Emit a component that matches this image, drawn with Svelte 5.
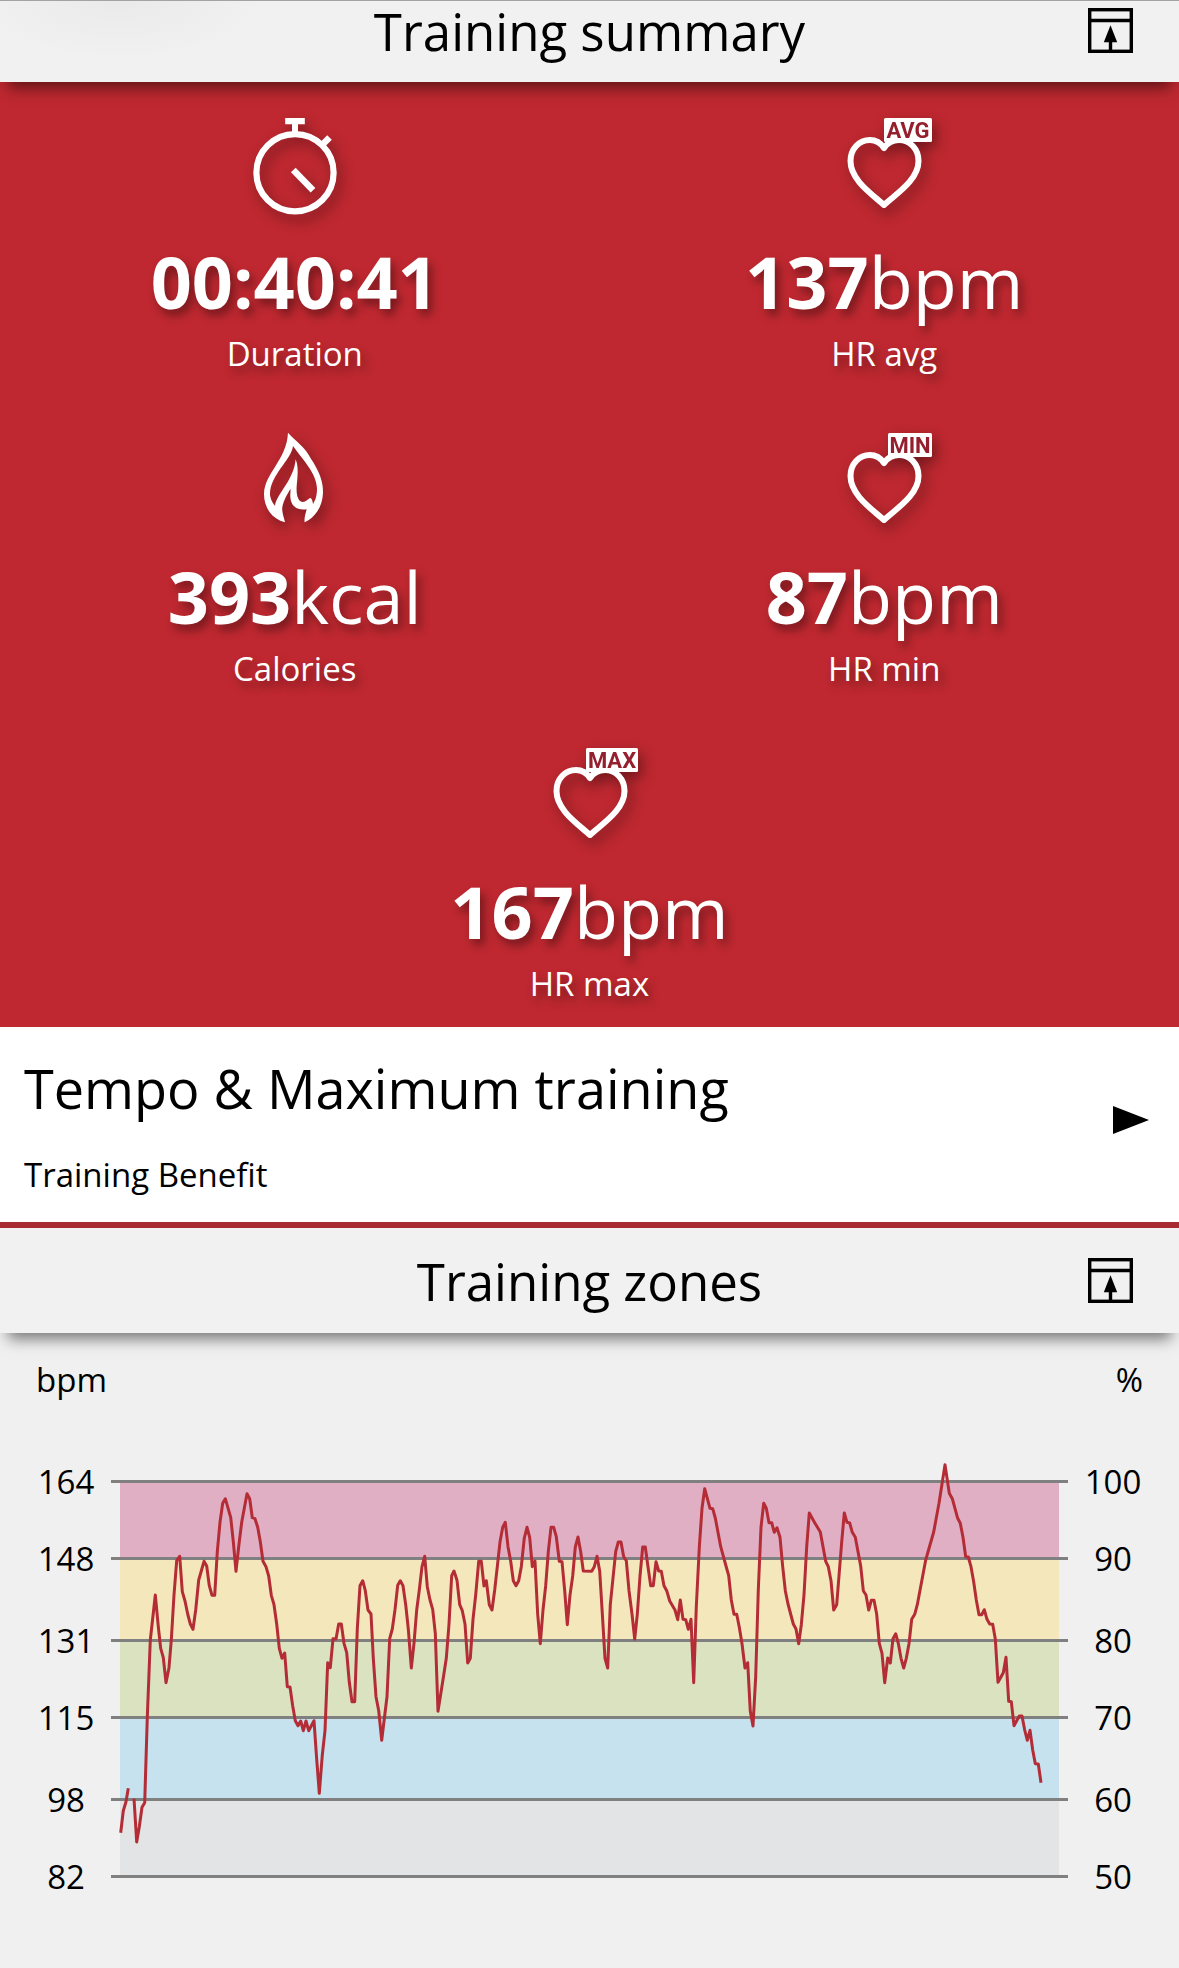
<script>
  const stats = [
    { kind: 'watch', value: '00:40:41', unit: '', label: 'Duration' },
    { kind: 'heart', badge: 'AVG', badgeX: 50, value: '137', unit: 'bpm', label: 'HR avg' },
    { kind: 'flame', value: '393', unit: 'kcal', label: 'Calories' },
    { kind: 'heart', badge: 'MIN', badgeX: 54, value: '87', unit: 'bpm', label: 'HR min' },
    { kind: 'heart', badge: 'MAX', badgeX: 46, value: '167', unit: 'bpm', label: 'HR max' },
  ];

  // Grid lines of the zone chart, top to bottom
  const levels = [
    { bpm: 164, pct: 100, y: 80 },
    { bpm: 148, pct: 90, y: 157 },
    { bpm: 131, pct: 80, y: 239 },
    { bpm: 115, pct: 70, y: 316 },
    { bpm: 98, pct: 60, y: 398 },
    { bpm: 82, pct: 50, y: 475 },
  ];
  const zoneColors = ['#e1afc3', '#f4e7bb', '#dae2c0', '#c5e2ee', '#e3e4e5'];
  const zones = zoneColors.map((color, i) => ({
    color,
    y: levels[i].y,
    height: levels[i + 1].y - levels[i].y,
  }));

  // Heart rate trace, recorded in chunks; x is counted from each chunk's start
  const warmup = { start: -60, points: '62,1178 70,1112 78,1085 85,1045' };
  const chunks = [
    {
      start: -60,
      points:
        '102,1076 110,1206 118,1160 126,1102 134,1088 142,832 151,600 166,465 175,560 182,625 190,653 198,728 207,683 214,600 222,465 230,362 239,349 247,455 255,483 263,522 271,552 279,568 287,510 296,420 304,393 312,364 320,378 328,437 336,466 344,466 352,335 360,247 368,190 376,176 392,232 400,305 408,394 416,320 425,247 441,161 449,176 457,233 465,236 473,262 481,305 489,364 498,380 506,408 514,466 522,494 530,552 538,625 546,655 554,639 562,740 570,741 578,798 586,842 594,857 602,843 610,872 618,843 626,872 642,842 650,958 658,1060 667,945 675,872 683,668 691,683 699,596 708,597 716,552 724,552 732,610 740,638 748,727 756,785 764,785 772,566 780,437 788,422 796,452 804,510',
    },
    {
      start: 750,
      points:
        '3,522 10,655 18,770 26,812 35,901 51,770 59,596 67,567 75,509 83,436 91,422 99,437 107,494 115,567 124,684 132,610 140,510 148,450 156,380 164,349 172,440 180,480 188,508 196,580 204,814 220,713 229,655 237,552 245,407 252,393 261,421 269,494 277,512 285,552 293,669 301,655 309,538 317,465 326,364 334,364 342,438 349,422 358,494 366,510 374,450 382,380 390,306 398,262 406,247 414,320 422,364 430,422 438,437 446,422 454,380 463,294 471,262 479,292 487,380 495,363 503,523 511,611 519,510 527,437 535,335 543,262 551,262 559,290 568,364 576,365 584,452 592,554 600,465 608,408 616,321 624,291 632,335 640,393 665,394 673,380 681,349 689,393 697,520 705,655 713,684 721,494 737,335 745,306 753,306 761,350 769,362 777,452 786,522 794,597 802,523 810,408',
    },
    {
      start: 1560,
      points:
        '8,321 16,321 24,380 32,437 40,437 48,365 56,393 64,394 72,437 80,452 89,483 105,510 113,539 121,480 129,538 137,539 145,568 153,538 161,728 169,500 178,322 186,205 194,146 210,205 218,206 226,234 242,320 258,378 266,407 274,480 282,523 290,523 298,562 306,611 315,684 323,668 331,814 339,858 347,710 355,450 363,262 371,190 379,205 387,248 395,248 403,277 411,263 420,292 428,380 436,452 444,492 460,552 468,567 476,611 484,554 492,465 500,320 508,219 524,248 541,276 557,364 565,380 573,422 581,510 590,494 605,306 613,219 621,247 629,249 637,277 646,292 662,378 670,452 678,465 686,510 694,481 702,481 710,523 718,610 726,640 734,728 743,654 751,669 759,596 767,581 775,610 783,655 791,684 799,655 807,611 815,538',
    },
    {
      start: 2100,
      points:
        '284,523 292,494 317,360 341,276 357,190 375,74 388,160 397,176 413,235 421,250 429,292 437,350 445,351 453,380 461,426 469,480 477,524 485,524 493,509 501,538 509,552 518,553 526,597 534,727 550,698 558,652 566,784 574,785 582,857 598,828 606,828 614,870 622,901 630,871 638,930 646,971 655,972 663,1028',
    },
  ];

  // One pixel of the plot holds three recorded units on both axes
  function toPlot({ start, points }) {
    return points.split(' ').map((pair) => {
      const [x, y] = pair.split(',').map(Number);
      return `${(120 + (x + start) / 3).toFixed(1)},${(79 + (y - 123) / 3).toFixed(1)}`;
    });
  }
  const traces = [toPlot(warmup).join(' '), chunks.flatMap(toPlot).join(' ')];
</script>

{#snippet sectionHeader(title, first)}
  <header class="bar" class:first>
    <h2>{title}</h2>
    <button class="expand" type="button" aria-label={`Expand ${title}`}>
      <svg viewBox="0 0 45 45" width="45" height="45" fill="none" stroke="#000" stroke-width="3.4">
        <rect x="1.7" y="1.7" width="41.6" height="41.6" />
        <path d="M2 12.5H43M22.5 33V43" />
        <path d="M22.5 17.3 29.2 34.3H15.8Z" fill="#000" stroke="none" />
      </svg>
    </button>
  </header>
{/snippet}

<main>
  <section>
    {@render sectionHeader('Training summary', true)}
    <div class="stats">
      {#each stats as s}
        <div class="stat">
          <svg class="icon" viewBox="0 0 100 100" width="100" height="100" fill="none" stroke="#fff" aria-hidden="true">
            {#if s.kind === 'watch'}
              <circle cx="50" cy="54.7" r="38.6" stroke-width="6.2" />
              <path d="M40.2 0H59.8V6.3H53V15H47V6.3H40.2Z" fill="#fff" stroke="none" />
              <path d="M77 27 84.5 19.5" stroke-width="6.5" />
              <path d="M48.3 52 68 72.3" stroke-width="6.5" />
            {:else if s.kind === 'flame'}
              <path
                transform="scale(.3333) translate(-75 -39)"
                fill="#fff"
                stroke="none"
                fill-rule="evenodd"
                d="M204 38C225 62 255 80 272 115C298 155 310 185 309 218C308 260 285 292 254 307C252 295 256 284 260 268C235 272 213 262 211 232C210 222 213 212 211 207C203 222 184 250 187 272C188 285 193 295 195 307C155 297 132 262 132 222C133 160 200 120 204 38ZM219 78C214 120 150 165 150 222C150 232 156 248 165 257C170 222 222 180 227 118C240 150 228 190 230 215C232 242 245 254 262 240C265 238 268 235 272 234C276 238 278 244 279 252C287 240 291 228 291 205C290 160 245 115 219 78Z"
              />
            {:else}
              <path
                stroke-width="6"
                stroke-linejoin="round"
                d="M50 30C46 24 41 22 36 22C25 22 16.5 31 16.5 43C16.5 62 38 76 50 87C62 76 84.5 62 84.5 43C84.5 31 76 22 65 22C60 22 54 24 50 30Z"
              />
              <rect x={s.badgeX} y="0" width={98 - s.badgeX} height="24" rx="1.5" fill="#fff" stroke="none" />
              <text class="badge" x={(s.badgeX + 98) / 2} y="20">{s.badge}</text>
            {/if}
          </svg>
          <p class="value"><strong>{s.value}</strong>{s.unit}</p>
          <p class="label">{s.label}</p>
        </div>
      {/each}
    </div>
    <a class="benefit" href="#benefit">
      <span class="benefit-text">
        <span class="benefit-title">Tempo &amp; Maximum training</span>
        <span>Training Benefit</span>
      </span>
      <svg class="arrow" viewBox="0 0 36 28" width="36" height="28" aria-hidden="true"><path d="M0 0 36 14 0 28Z" /></svg>
    </a>
  </section>

  <section>
    {@render sectionHeader('Training zones', false)}
    <div class="units"><span>bpm</span><span>%</span></div>
    <svg class="chart" viewBox="0 0 1179 566" role="img" aria-label="Heart rate over time">
      {#each zones as z}
        <rect x="120" y={z.y} width="939" height={z.height} fill={z.color} />
      {/each}
      {#each levels as l}
        <path class="grid" d={`M111 ${l.y - 0.5}H1068`} />
        <text x="66" y={l.y + 12}>{l.bpm}</text>
        <text x="1113" y={l.y + 12}>{l.pct}</text>
      {/each}
      {#each traces as t}
        <polyline class="trace" points={t} />
      {/each}
    </svg>
  </section>
</main>

<style>
  :global(body) {
    margin: 0;
    background: #f0f0f0;
  }
  main {
    font-family: 'Open Sans', 'Noto Sans', sans-serif;
    font-size: 33px;
    line-height: 44px;
    color: #000;
    background: #f0f0f0;
  }
  h2,
  p {
    margin: 0;
    font-weight: 400;
  }
  .bar {
    position: relative;
    box-sizing: border-box;
    display: grid;
    grid-template-columns: 1fr auto 1fr;
    align-items: center;
    padding: 22px 46px 23px;
    background: #f1f1f1;
    box-shadow: 0 14px 14px -8px rgba(0, 0, 0, 0.5);
  }
  .bar.first {
    padding-top: 0;
    padding-bottom: 22px;
    background: radial-gradient(ellipse 150px 60px at 120px 0, #eaeaea, #f1f1f1);
    box-shadow: inset 0 1px #a4a2a4, 0 14px 14px -8px rgba(0, 0, 0, 0.5);
  }
  h2 {
    grid-column: 2;
    padding-top: 2px;
    font-size: 51px;
    line-height: 58px;
  }
  .expand {
    justify-self: end;
    display: block;
    padding: 0;
    border: 0;
    background: none;
  }
  .expand svg {
    display: block;
  }
  .stats {
    display: flex;
    flex-wrap: wrap;
    justify-content: center;
    background: #bf2830;
    color: #fff;
  }
  .stat {
    box-sizing: border-box;
    width: 50%;
    padding: 36px 0 21px;
    text-align: center;
    text-shadow: 4px 6px 10px rgba(0, 0, 0, 0.4);
  }
  .icon {
    display: block;
    margin: 0 auto 14px;
    overflow: visible;
    filter: drop-shadow(4px 6px 7px rgba(0, 0, 0, 0.4));
  }
  .badge {
    font: 700 22px Roboto, sans-serif;
    fill: #93202c;
    stroke: none;
    text-anchor: middle;
    text-shadow: none;
  }
  .value {
    margin-bottom: 2px;
    font-size: 72px;
    line-height: 98px;
  }
  .value strong {
    font-weight: 700;
  }
  .benefit {
    display: flex;
    align-items: center;
    justify-content: space-between;
    padding: 24px 30px 25px 24px;
    border-bottom: 6px solid #a92b32;
    background: #fff;
    color: #000;
    text-decoration: none;
  }
  .benefit-text {
    display: flex;
    flex-direction: column;
    gap: 28px;
  }
  .benefit-title {
    font-size: 54px;
    line-height: 74px;
  }
  .arrow {
    margin-bottom: 8px;
  }
  .units {
    display: flex;
    justify-content: space-between;
    padding: 25px 36px 0;
  }
  .chart {
    display: block;
    width: 100%;
    height: auto;
  }
  .chart text {
    text-anchor: middle;
  }
  .grid {
    stroke: #808080;
    stroke-width: 3;
  }
  .trace {
    fill: none;
    stroke: #b42c35;
    stroke-width: 3;
    stroke-linejoin: round;
  }
</style>
